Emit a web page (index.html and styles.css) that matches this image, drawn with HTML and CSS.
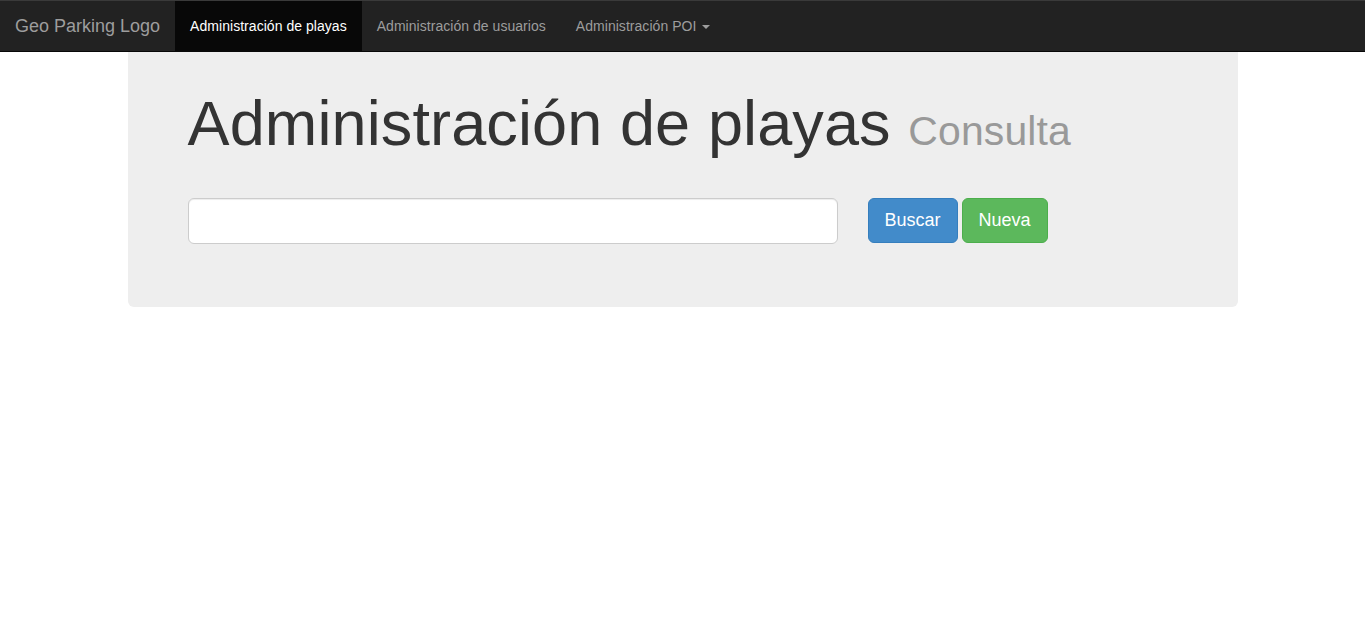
FILE: index.html
```html
<!DOCTYPE html>
<html lang="es">
<head>
<meta charset="utf-8">
<title>Administración de playas</title>
<link rel="stylesheet" href="styles.css">
</head>
<body>
<nav class="navbar">
  <a class="brand" href="#">Geo Parking Logo</a>
  <ul class="nav">
    <li><a class="nav-link active" href="#">Administración de playas</a></li>
    <li><a class="nav-link" href="#">Administración de usuarios</a></li>
    <li><a class="nav-link" href="#">Administración POI <span class="caret"></span></a></li>
  </ul>
</nav>
<div class="container">
  <div class="jumbotron">
    <h1 class="title">Administración de playas <small class="subtitle">Consulta</small></h1>
    <form class="search">
      <input class="search-input" type="text">
      <div class="actions">
        <button class="btn btn-primary" type="button">Buscar</button>
        <button class="btn btn-success" type="button">Nueva</button>
      </div>
    </form>
  </div>
</div>
</body>
</html>
```

FILE: styles.css
```css
* { box-sizing: border-box; }
html, body { margin: 0; padding: 0; }
body {
  font-family: "Liberation Sans", Arial, Helvetica, sans-serif;
  font-size: 14px;
  line-height: 1.428571;
  color: #333;
  background: #fff;
}
.navbar {
  display: flex;
  align-items: stretch;
  height: 52px;
  background: #222;
  border-top: 1px solid #3a3a3a;
  border-bottom: 1px solid #080808;
}
.brand {
  display: block;
  padding: 15px;
  height: 50px;
  font-size: 18px;
  line-height: 20px;
  color: #9d9d9d;
  text-decoration: none;
}
.nav {
  display: flex;
  list-style: none;
  margin: 0;
  padding: 0;
}
.nav-link {
  display: block;
  padding: 15px;
  height: 50px;
  line-height: 20px;
  color: #9d9d9d;
  text-decoration: none;
  letter-spacing: 0.04px;
}
.nav-link.active {
  color: #fff;
  background: #080808;
}
.caret {
  display: inline-block;
  width: 0;
  height: 0;
  margin-left: 2px;
  vertical-align: middle;
  border-top: 4px solid #9d9d9d;
  border-left: 4px solid transparent;
  border-right: 4px solid transparent;
}
.container {
  width: 1140px;
  margin: 0 auto;
  padding: 0 15px;
}
.jumbotron {
  background: #eee;
  border-radius: 0 0 6px 6px;
  padding: 37px 60px 63px;
}
.title {
  margin: 0 0 40px;
  font-size: 63px;
  line-height: 1.1;
  font-weight: 500;
  color: #333;
  letter-spacing: 0.12px;
}
.subtitle {
  font-size: 65%;
  font-weight: normal;
  color: #999;
}
.search {
  display: flex;
  align-items: flex-start;
  gap: 30px;
}
.search-input {
  width: 650px;
  height: 46px;
  padding: 10px 16px;
  font: 18px "Liberation Sans", Arial, sans-serif;
  border: 1px solid #ccc;
  border-radius: 6px;
  background: #fff;
  box-shadow: inset 0 1px 1px rgba(0,0,0,.075);
  outline: none;
}
.actions {
  display: flex;
  gap: 4px;
}
.btn {
  height: 45px;
  padding: 0 16px;
  font: 18px/1.3333 "Liberation Sans", Arial, sans-serif;
  border: 1px solid transparent;
  border-radius: 6px;
  color: #fff;
  cursor: pointer;
}
.btn-primary {
  background: #428bca;
  border-color: #357ebd;
}
.btn-success {
  background: #5cb85c;
  border-color: #4cae4c;
}
```
